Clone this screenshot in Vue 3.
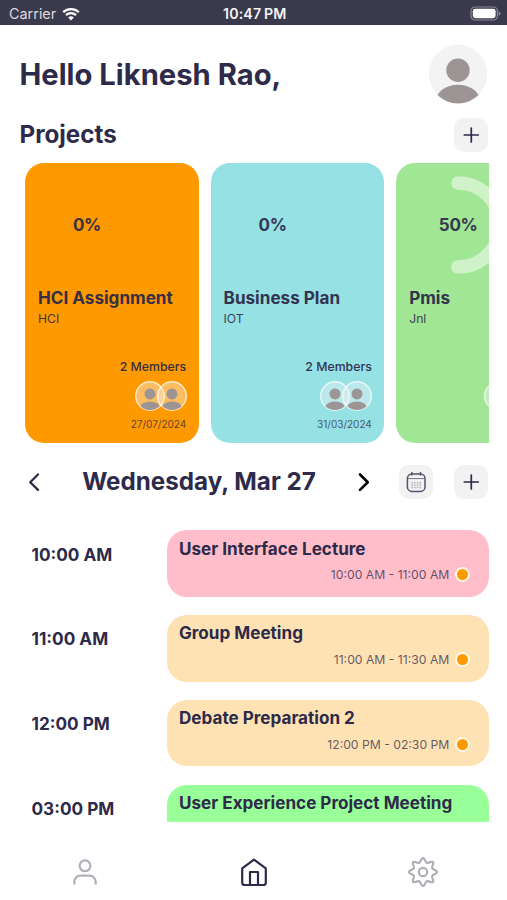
<script setup>
const projects = [
  { name: 'HCI Assignment', detail: 'HCI', percent: 0, members: 2, due: '27/07/2024', tone: 'orange' },
  { name: 'Business Plan', detail: 'IOT', percent: 0, members: 2, due: '31/03/2024', tone: 'cyan' },
  { name: 'Pmis', detail: 'Jnl', percent: 50, members: 3, tone: 'green' },
]

const events = [
  { start: '10:00 AM', title: 'User Interface Lecture', range: '10:00 AM - 11:00 AM', tone: 'pink' },
  { start: '11:00 AM', title: 'Group Meeting', range: '11:00 AM - 11:30 AM', tone: 'sand' },
  { start: '12:00 PM', title: 'Debate Preparation 2', range: '12:00 PM - 02:30 PM', tone: 'sand' },
  { start: '03:00 PM', title: 'User Experience Project Meeting', tone: 'mint' },
]

const circumference = 2 * Math.PI * 42

// Eight-lobed outline of the settings gear
const gear = Array.from({ length: 144 }, (_, i) => {
  const a = (i / 144) * 2 * Math.PI
  const r = 12 + 2 * Math.cos(8 * a)
  const t = a - 0.03 * Math.sin(8 * a)
  return `${(16 + r * Math.sin(t)).toFixed(2)},${(16 - r * Math.cos(t)).toFixed(2)}`
}).join(' ')
</script>

<template>
  <div class="phone">
    <div class="status">
      <div class="carrier">
        <span>Carrier</span>
        <svg class="wifi" viewBox="0 0 18 14" width="18" height="14">
          <path d="M1.2 5.2 A11.2 11.2 0 0 1 16.8 5.2" />
          <path d="M4 8.1 A7.2 7.2 0 0 1 14 8.1" />
          <path class="wedge" d="M9 13.6 L6.2 10.6 A4 4 0 0 1 11.8 10.6 Z" />
        </svg>
      </div>
      <span class="clock">10:47 PM</span>
      <svg class="battery" viewBox="0 0 31 15" width="31" height="15">
        <rect class="shell" x="1" y="1" width="26.4" height="13" rx="4" />
        <rect class="charge" x="2.8" y="2.8" width="22.8" height="9.4" rx="2.4" />
        <path class="cap" d="M28.6 5.2 Q30.6 6 30.6 7.5 Q30.6 9 28.6 9.8 Z" />
      </svg>
    </div>

    <header class="greeting">
      <h1>Hello Liknesh Rao,</h1>
      <svg class="profile" viewBox="0 0 60 60" width="60" height="60">
        <clipPath id="profile-clip"><circle cx="30" cy="30" r="29.5" /></clipPath>
        <g clip-path="url(#profile-clip)">
          <circle class="disc" cx="30" cy="30" r="29.5" />
          <circle class="person" cx="30" cy="26.2" r="11.7" />
          <ellipse class="person" cx="30" cy="57" rx="22" ry="16.2" />
        </g>
      </svg>
    </header>

    <section class="section-head">
      <h2>Projects</h2>
      <button class="square" aria-label="Add project">
        <svg viewBox="0 0 16 16" width="16" height="16"><path d="M8.3 1v14M1.3 8h14" /></svg>
      </button>
    </section>

    <section class="projects">
      <article v-for="p in projects" :key="p.name" class="card" :class="p.tone">
        <div class="ring">
          <svg viewBox="0 0 98 98" width="98" height="98">
            <circle
              v-if="p.percent"
              cx="49" cy="49" r="42"
              transform="rotate(-90 49 49)"
              :stroke-dasharray="`${circumference * p.percent / 100} ${circumference}`"
            />
          </svg>
          <span>{{ p.percent }}%</span>
        </div>
        <h3>{{ p.name }}</h3>
        <p class="detail">{{ p.detail }}</p>
        <p class="members"><template v-if="p.due">{{ p.members }} Members</template></p>
        <div class="avatars">
          <svg v-for="m in p.members" :key="m" class="avatar" viewBox="0 0 30 30" width="30" height="30">
            <clipPath :id="`${p.tone}-${m}`"><circle cx="15" cy="15" r="14" /></clipPath>
            <circle class="veil" cx="15" cy="15" r="14.3" />
            <g :clip-path="`url(#${p.tone}-${m})`">
              <circle class="person" cx="15" cy="12.9" r="5.5" />
              <ellipse class="person" cx="15" cy="27.4" rx="10.3" ry="7" />
            </g>
          </svg>
        </div>
        <p v-if="p.due" class="due">{{ p.due }}</p>
      </article>
    </section>

    <section class="day">
      <svg class="chevron" viewBox="0 0 12 20" width="12" height="20"><path d="M10 2.5 2.2 10.2l7.8 7.7" /></svg>
      <h2>Wednesday, Mar 27</h2>
      <svg class="chevron next" viewBox="0 0 12 20" width="12" height="20"><path d="M2 2.5l7.8 7.7L2 17.9" /></svg>
      <button class="square calendar" aria-label="Calendar">
        <svg viewBox="0 0 20 22" width="20" height="22">
          <rect x="1.4" y="3" width="17.6" height="17.4" rx="4.5" />
          <path class="fine" d="M1.7 7.6h17" />
          <path d="M5.8 1.4v2.6M14.5 1.4v2.6" />
          <path class="dots" d="M5.4 11.7h9.6M5.4 14.1h9.6M5.4 16.5h9.6" />
        </svg>
      </button>
      <button class="square" aria-label="Add event">
        <svg viewBox="0 0 16 16" width="16" height="16"><path d="M8.3 1v14M1.3 8h14" /></svg>
      </button>
    </section>

    <section class="schedule">
      <div v-for="e in events" :key="e.start" class="slot">
        <time>{{ e.start }}</time>
        <article class="event" :class="e.tone">
          <h3>{{ e.title }}</h3>
          <div v-if="e.range" class="range"><span>{{ e.range }}</span><i class="dot"></i></div>
        </article>
      </div>
    </section>

    <nav class="tabs">
      <svg class="tab" viewBox="0 0 32 32" width="32" height="32">
        <circle cx="16" cy="9.8" r="5.4" />
        <path d="M5.3 28.5v-2.7a6.2 6.2 0 0 1 6.2-6.2h9a6.2 6.2 0 0 1 6.2 6.2v2.7" />
      </svg>
      <svg class="tab active" viewBox="0 0 32 32" width="32" height="32">
        <path d="M4.2 12.3 16 3.7l11.8 8.6v14.1a2.6 2.6 0 0 1-2.6 2.6H6.8a2.6 2.6 0 0 1-2.6-2.6z" />
        <path d="M12 29V16h8v13" />
      </svg>
      <svg class="tab" viewBox="0 0 32 32" width="32" height="32">
        <circle cx="16" cy="16" r="4.2" />
        <polygon :points="gear" />
      </svg>
    </nav>
  </div>
</template>

<style>
body { margin: 0; background: #fff; }
</style>

<style scoped>
* { box-sizing: border-box; }
h1, h2, h3, p { margin: 0; white-space: nowrap; }
svg { display: block; flex: none; }
.phone {
  width: 507px; height: 900px; overflow: hidden;
  display: flex; flex-direction: column;
  background: #fff; color: #2d2a4a;
  font-family: Inter, "Liberation Sans", sans-serif;
}
.status {
  height: 25px; flex: none; padding: 2px 6.5px 0 9px;
  display: grid; grid-template-columns: 1fr auto 1fr; align-items: center;
  background: #3b394c; color: #f5f5f8; line-height: 22px;
}
.carrier { display: flex; align-items: center; gap: 6px; font-size: 14.4px; color: #d9d9df; }
.wifi { fill: none; stroke: #fff; stroke-width: 2.3; }
.wedge { fill: #fff; stroke: none; }
.clock { font-size: 14.2px; font-weight: 600; word-spacing: -1px; letter-spacing: .15px; }
.battery { justify-self: end; }
.shell { fill: none; stroke: #8b8a98; stroke-width: 1.2; }
.charge { fill: #fff; }
.cap { fill: #8b8a98; }

.greeting {
  height: 92px; flex: none; padding: 19px 19px 0 19.5px;
  display: flex; justify-content: space-between; align-items: flex-start;
}
h1 { padding-top: 1px; font-size: 29.2px; font-weight: 700; line-height: 60px; }
.disc { fill: #f3f3f3; }
.person { fill: #9d9595; }

.section-head {
  height: 35px; flex: none; padding: 0 18.8px 0 19.5px;
  display: flex; justify-content: space-between; align-items: center;
}
h2 { font-size: 24.2px; font-weight: 700; line-height: 34px; }
.square {
  width: 34px; height: 34px; flex: none; padding: 0; border: 0; border-radius: 10px;
  background: #f2f2f2; display: flex; align-items: center; justify-content: center;
}
.square svg { fill: none; stroke: #2d2a4a; stroke-width: 1.7; stroke-linecap: round; }
.square.calendar svg { stroke: #55526e; stroke-width: 1.5; }
.calendar .fine { stroke-width: .8; }
.calendar .dots { stroke-width: 1.5; stroke-linecap: butt; stroke-dasharray: 1.5 1.2; opacity: .4; }

.projects {
  height: 280px; flex: none; margin: 11.4px 18.5px 0 25.3px;
  display: flex; gap: 12px; overflow: hidden;
}
.card {
  width: 173.6px; height: 280px; flex: none; padding: 12.2px 12.7px;
  border-radius: 19px; display: flex; flex-direction: column;
}
.orange { background: #ff9900; }
.cyan { background: #96e1e4; }
.green { background: #a1e694; }
.card h3, .card p { opacity: .95; }
.ring { width: 98px; height: 98px; display: grid; place-items: center; }
.ring > * { grid-area: 1 / 1; }
.ring circle { fill: none; stroke: #d0f2c9; stroke-width: 13.5; stroke-linecap: round; }
.ring span { font-size: 17px; letter-spacing: -.3px; font-weight: 700; line-height: 22px; opacity: .92; }
.card h3 { margin-top: 13.4px; font-size: 17.1px; font-weight: 700; line-height: 22px; }
.card .detail { font-size: 12.2px; line-height: 16px; margin-top: 2.3px; opacity: .88; }
.card .members { align-self: flex-end; margin-top: 31.5px; height: 16px; font-size: 12.3px; font-weight: 500; line-height: 16px; }
.avatars { align-self: flex-end; display: flex; margin: 6.7px -.7px 0 0; }
.avatar { margin-left: -8px; }
.veil { fill: rgba(243, 243, 243, .4); stroke: rgba(255, 255, 255, .75); stroke-width: 1.4; }
.card .due { align-self: flex-end; margin-top: 6px; font-size: 10px; line-height: 14px; opacity: .75; }

.day {
  height: 34px; flex: none; margin-top: 21px; padding-left: 28px;
  display: grid; grid-template-columns: 12px 318px 12px 34px 34px;
  align-items: center; justify-content: start;
}
.day h2 { padding-top: 1px; text-align: center; }
.chevron { fill: none; stroke: #2d2a4a; stroke-width: 2.3; stroke-linecap: round; stroke-linejoin: round; }
.next { stroke: #000; stroke-width: 2.6; }
.calendar { margin-left: 29px; }
.day > .square:last-child { margin-left: 50.3px; }

.schedule {
  height: 291.6px; flex: none; margin: 32px 18.5px 0 31.5px; overflow: hidden;
  display: flex; flex-direction: column; gap: 18.4px;
}
.slot { display: flex; justify-content: space-between; flex: none; height: 66.4px; }
time { padding-top: 13.2px; font-size: 17.2px; font-weight: 700; line-height: 22px; white-space: nowrap; }
.event { width: 322px; height: 66.4px; padding: 7.2px 18.2px 0 12.5px; border-radius: 20px; }
.event h3 { font-size: 17.1px; font-weight: 700; line-height: 22px; }
.pink { background: #ffbec9; }
.sand { background: #ffe2b3; }
.mint { background: #99ff99; }
.range {
  display: flex; justify-content: flex-end; align-items: center; gap: 6px;
  margin-top: 7.8px; height: 15px; font-size: 12.2px; color: rgba(45, 42, 74, .75); white-space: nowrap;
}
.dot { width: 15px; height: 15px; border-radius: 50%; border: 2px solid #fff8ea; background: #ff9900; }

.tabs {
  height: 78px; flex: none; padding-top: 34.3px;
  display: grid; grid-template-columns: repeat(3, 169px); justify-items: center; align-items: start;
}
.tab { fill: none; stroke: #b1b0b9; stroke-width: 2.2; stroke-linejoin: round; }
.tab.active { stroke: #2d2a4a; }
</style>
